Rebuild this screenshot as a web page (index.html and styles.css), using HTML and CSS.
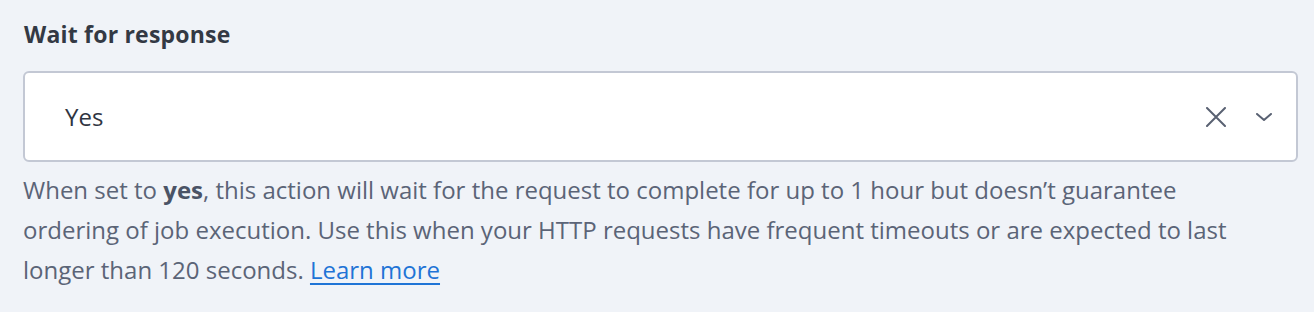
FILE: index.html
```html
<!DOCTYPE html>
<html lang="en">
<head>
<meta charset="utf-8">
<title>Wait for response</title>
<link rel="stylesheet" href="styles.css">
</head>
<body>
<div class="field">
  <label class="field-label">Wait for response</label>
  <div class="select">
    <span class="select-value">Yes</span>
    <div class="select-actions">
      <button class="icon-btn clear" aria-label="Clear">
        <svg width="20" height="20" viewBox="0 0 20 20"><path d="M1 1 L19 19 M19 1 L1 19" stroke="currentColor" stroke-width="2" stroke-linecap="round" fill="none"/></svg>
      </button>
      <button class="icon-btn caret" aria-label="Open">
        <svg width="16" height="8" viewBox="0 0 16 8"><path d="M1 1 L8 7 L15 1" stroke="currentColor" stroke-width="2" stroke-linecap="round" stroke-linejoin="round" fill="none"/></svg>
      </button>
    </div>
  </div>
  <p class="field-help">When set to <strong>yes</strong>, this action will wait for the request to complete for up to 1 hour but doesn’t guarantee ordering of job execution. Use this when your HTTP requests have frequent timeouts or are expected to last longer than 120 seconds. <a href="#" class="link">Learn more</a></p>
</div>
</body>
</html>
```
FILE: styles.css
```css
html, body {
  margin: 0;
  padding: 0;
  background: #f0f3f8;
}
body {
  font-family: "Open Sans", "Noto Sans", sans-serif;
  padding: 19px 16px 0 23px;
}
.field {
  display: flex;
  flex-direction: column;
}
.field-label {
  font-size: 23px;
  line-height: 31px;
  font-weight: 700;
  letter-spacing: 0.2px;
  color: #333944;
  padding-left: 1px;
}
.select {
  margin-top: 21px;
  height: 91px;
  box-sizing: border-box;
  border: 2px solid #c3c8d4;
  border-radius: 6px;
  background: #ffffff;
  display: flex;
  align-items: center;
  padding: 0 24px 0 40px;
}
.select-value {
  flex: 1;
  font-size: 24px;
  line-height: 32px;
  color: #2f3542;
}
.select-actions {
  display: flex;
  align-items: center;
  gap: 30px;
}
.icon-btn {
  border: 0;
  background: none;
  padding: 0;
  color: #596172;
  display: flex;
  align-items: center;
  justify-content: center;
}
.field-help {
  margin: 8px 0 0;
  max-width: 1250px;
  font-size: 24px;
  line-height: 40px;
  color: #5b6477;
}
.field-help strong {
  font-weight: 700;
  color: #4a5366;
}
.link {
  color: #1f74d6;
  text-decoration: underline;
  text-decoration-thickness: 2px;
  text-underline-offset: 4px;
}
```
